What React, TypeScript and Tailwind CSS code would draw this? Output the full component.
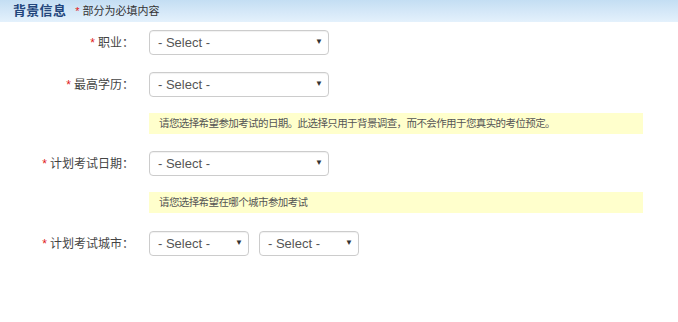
const font = '"Liberation Sans", "Noto Sans CJK SC", sans-serif';

function Select({ width }: { width: string }) {
  return (
    <div className={`relative ${width} h-[25px]`}>
      <select
        className="appearance-none w-full h-full rounded-[4px] border border-[#cccccc] bg-white pl-[8px] text-[13px] text-[#555555] outline-none shadow-[inset_0_1px_1px_rgba(0,0,0,0.06)]"
        defaultValue=""
      >
        <option value="">- Select -</option>
      </select>
      <span className="absolute right-[6px] top-[8px] text-[8px] leading-none text-[#333333] pointer-events-none">▼</span>
    </div>
  );
}

function Label({ text }: { text: string }) {
  return (
    <div className="w-[136px] pr-[2px] text-right text-[12px] text-[#444444]">
      <span className="text-[#e02020] mr-[3px]">*</span>
      {text}：
    </div>
  );
}

function Note({ text }: { text: string }) {
  return (
    <div className="ml-[149px] w-[494px] h-[21px] bg-[#ffffcc] pl-[10px] flex items-center text-[10.5px] tracking-[-0.6px] text-[#555555]">
      {text}
    </div>
  );
}

export default function App() {
  return (
    <div className="w-[678px] h-[322px] bg-white" style={{ fontFamily: font }}>
      <div className="h-[22px] flex items-center pl-[13px] bg-gradient-to-b from-[#c4def3] to-[#e4f1fc]">
        <span className="text-[13px] font-bold text-[#23467c] tracking-[0.3px]">背景信息</span>
        <span className="ml-[9px] text-[11px] text-[#333333]">
          <span className="text-[#e02020] mr-[3px]">*</span>部分为必填内容
        </span>
      </div>

      <div className="flex flex-col pt-[8px]">
        <div className="flex items-center">
          <Label text="职业" />
          <div className="ml-[13px]"><Select width="w-[180px]" /></div>
        </div>
        <div className="flex items-center mt-[17px]">
          <Label text="最高学历" />
          <div className="ml-[13px]"><Select width="w-[180px]" /></div>
        </div>
        <div className="mt-[16px]">
          <Note text="请您选择希望参加考试的日期。此选择只用于背景调查，而不会作用于您真实的考位预定。" />
        </div>
        <div className="flex items-center mt-[17px]">
          <Label text="计划考试日期" />
          <div className="ml-[13px]"><Select width="w-[180px]" /></div>
        </div>
        <div className="mt-[16px]">
          <Note text="请您选择希望在哪个城市参加考试" />
        </div>
        <div className="flex items-center mt-[18px]">
          <Label text="计划考试城市" />
          <div className="ml-[13px] flex gap-[10px]">
            <Select width="w-[100px]" />
            <Select width="w-[100px]" />
          </div>
        </div>
      </div>
    </div>
  );
}
